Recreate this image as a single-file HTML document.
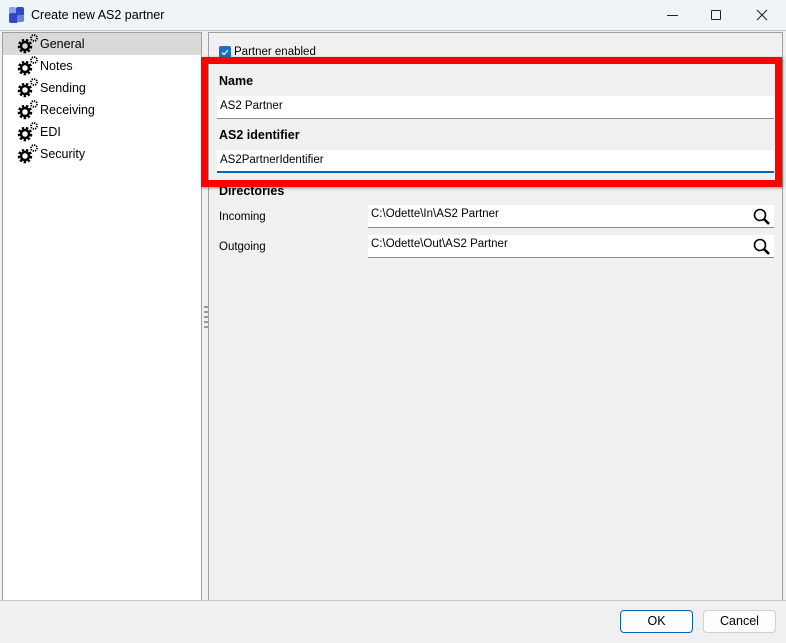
<!DOCTYPE html>
<html><head><style>
*{box-sizing:border-box;margin:0;padding:0}
body{width:786px;height:643px;background:#f0f0f0;font-family:"Liberation Sans",sans-serif;font-size:12px;color:#000;position:relative;overflow:hidden}
.abs{position:absolute}
.title{left:0;top:0;width:786px;height:31px;background:#eff4f9;border-bottom:1px solid #c8c8c8}
.left{left:2px;top:32px;width:200px;height:569px;background:#fff;border:1px solid #a0a0a0}
.item{position:absolute;left:0;width:198px;height:22px;line-height:22px;padding-left:37px;font-size:12.5px}
.inp{position:absolute;background:#fff;border-bottom:1px solid #8a8a8a;height:23px;padding-left:3px;line-height:20px;font-size:11.5px}
.btn{position:absolute;top:610px;width:73px;height:23px;border:1px solid #d0d0d0;border-radius:4px;background:#fdfdfd;text-align:center;line-height:21px;font-size:12.5px}
</style></head><body>
<div class="abs title">
 <svg class="abs" style="left:9px;top:7px" width="16" height="16"><rect x="0" y="0" width="7" height="7" rx="2" fill="#8aa0f0"/><rect x="7" y="0" width="8" height="9" rx="2" fill="#2f47c8"/><rect x="0" y="6" width="9" height="10" rx="2" fill="#2f47c8"/><rect x="8" y="8" width="7" height="7" rx="2" fill="#6a7fe0"/></svg>
 <div class="abs" style="left:31px;top:8px;font-size:12.5px">Create new AS2 partner</div>
 <div class="abs" style="left:667px;top:15px;width:11px;height:1px;background:#222"></div>
 <div class="abs" style="left:711px;top:10px;width:10px;height:10px;border:1px solid #222;border-radius:1px"></div>
 <svg class="abs" style="left:756px;top:9px" width="12" height="12"><path d="M1 1L11 11M11 1L1 11" stroke="#222" stroke-width="1.1"/></svg>
</div>
<div class="abs left">
 <div class="item" style="top:0;background:#d9d9d9">General</div>
 <div class="item" style="top:22px">Notes</div>
 <div class="item" style="top:44px">Sending</div>
 <div class="item" style="top:66px">Receiving</div>
 <div class="item" style="top:88px">EDI</div>
 <div class="item" style="top:110px">Security</div>
</div>
<svg class="abs" style="left:17px;top:34px" width="24" height="140">
 <defs><g id="g"><circle cx="8" cy="12" r="5.5" fill="none" stroke="#000" stroke-width="3.5" stroke-dasharray="2.2 1.6"/><circle cx="8" cy="12" r="4" fill="none" stroke="#000" stroke-width="2.5"/><circle cx="17" cy="4" r="3" fill="none" stroke="#000" stroke-width="1.8" stroke-dasharray="1.3 1"/></g></defs>
 <use href="#g" y="0"/><use href="#g" y="22"/><use href="#g" y="44"/><use href="#g" y="66"/><use href="#g" y="88"/><use href="#g" y="110"/>
</svg>
<div class="abs" style="left:208px;top:32px;width:575px;height:569px;border:1px solid #a0a0a0;border-bottom:none"></div>
<div class="abs" style="left:204px;top:306px;width:4px;height:22px;background:repeating-linear-gradient(#999 0 2px,transparent 2px 5px)"></div>
<div class="abs" style="left:0;top:600px;width:786px;height:1px;background:#c8c8c8"></div>
<div class="abs" style="left:219px;top:46px;width:12px;height:12px;background:#1d6fc4;border-radius:2px"></div>
<svg class="abs" style="left:219px;top:46px" width="12" height="12"><path d="M3 6.5L5 8.5L9 4" stroke="#fff" fill="none" stroke-width="1.2"/></svg>
<div class="abs" style="left:234px;top:46px;font-size:11.5px">Partner enabled</div>
<div class="abs" style="left:219px;top:74px;font-weight:bold;font-size:12.5px">Name</div>
<div class="inp" style="left:217px;top:96px;width:557px">AS2 Partner</div>
<div class="abs" style="left:219px;top:128px;font-weight:bold;font-size:12.5px">AS2 identifier</div>
<div class="inp" style="left:217px;top:150px;width:557px;border-bottom:2px solid #0a64b4">AS2PartnerIdentifier</div>
<div class="abs" style="left:219px;top:184px;font-weight:bold;font-size:12.5px">Directories</div>
<div class="abs" style="left:219px;top:211px;font-size:11.5px">Incoming</div>
<div class="inp" style="left:368px;top:205px;width:406px;line-height:18px">C:\Odette\In\AS2 Partner</div>
<div class="abs" style="left:219px;top:241px;font-size:11.5px">Outgoing</div>
<div class="inp" style="left:368px;top:235px;width:406px;line-height:18px">C:\Odette\Out\AS2 Partner</div>
<svg class="abs" style="left:753px;top:208px" width="18" height="18"><circle cx="7" cy="7" r="5.5" fill="none" stroke="#000" stroke-width="1.6"/><path d="M11 11L16 16" stroke="#000" stroke-width="2.6"/></svg>
<svg class="abs" style="left:753px;top:238px" width="18" height="18"><circle cx="7" cy="7" r="5.5" fill="none" stroke="#000" stroke-width="1.6"/><path d="M11 11L16 16" stroke="#000" stroke-width="2.6"/></svg>
<div class="abs" style="left:201px;top:57px;width:581px;height:130px;border:7px solid #ff0000;box-shadow:1px 1px 3px rgba(0,0,0,.4)"></div>
<div class="btn" style="left:620px;border:1px solid #0a64b4">OK</div>
<div class="btn" style="left:703px">Cancel</div>
</body></html>
